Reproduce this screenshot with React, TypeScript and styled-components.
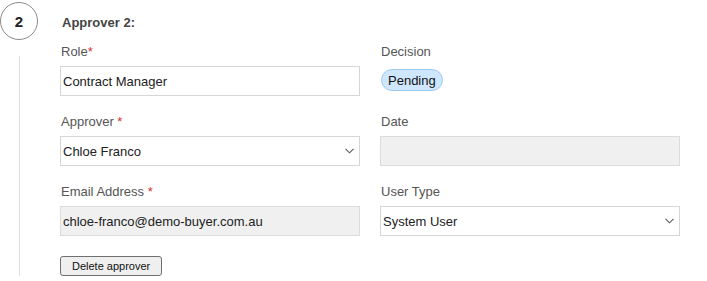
import React from "react";
import styled, { createGlobalStyle } from "styled-components";

const GlobalStyle = createGlobalStyle`
    body {
        margin: 0;
        background: #ffffff;
        font-family: "Liberation Sans", Arial, sans-serif;
    }
`;

type FieldProps = {
    label: string;
    required?: boolean;
    spaced?: boolean;
    children: React.ReactNode;
};

const Field = ({ label, required, spaced, children }: FieldProps) => (
    <FieldBox>
        <Label>
            {label}
            {required && <Star>{spaced ? " *" : "*"}</Star>}
        </Label>
        {children}
    </FieldBox>
);

const Chevron = () => (
    <ChevronIcon width="9" height="6" viewBox="0 0 9 6">
        <path d="M0.5 0.8 L4.5 4.8 L8.5 0.8" fill="none" stroke="#5a5a5a" strokeWidth="1.1" />
    </ChevronIcon>
);

type SelectProps = { value: string; options: string[] };

const SelectBox = ({ value, options }: SelectProps) => (
    <SelectWrap>
        <Select defaultValue={value}>
            {options.map((o) => (
                <option key={o}>{o}</option>
            ))}
        </Select>
        <Chevron />
    </SelectWrap>
);

export default function App() {
    return (
        <>
            <GlobalStyle />
            <Step>
                <Rail>
                    <StepNumber>2</StepNumber>
                    <RailLine />
                </Rail>
                <Body>
                    <Title>Approver 2:</Title>
                    <FieldGrid>
                        <Field label="Role" required>
                            <TextInput defaultValue="Contract Manager" />
                        </Field>
                        <Field label="Decision">
                            <BadgeRow>
                                <Badge>Pending</Badge>
                            </BadgeRow>
                        </Field>
                        <Field label="Approver" required spaced>
                            <SelectBox value="Chloe Franco" options={["Chloe Franco"]} />
                        </Field>
                        <Field label="Date">
                            <TextInput readOnly $locked defaultValue="" />
                        </Field>
                        <Field label="Email Address" required spaced>
                            <TextInput readOnly $locked defaultValue="chloe-franco@demo-buyer.com.au" />
                        </Field>
                        <Field label="User Type">
                            <SelectBox value="System User" options={["System User", "External User"]} />
                        </Field>
                    </FieldGrid>
                    <DeleteButton type="button">Delete approver</DeleteButton>
                </Body>
            </Step>
        </>
    );
}

const Step = styled.div`
    display: flex;
    padding-bottom: 5px;
`;

const Rail = styled.div`
    width: 40px;
    padding-top: 2px;
    display: flex;
    flex-direction: column;
    align-items: flex-start;
`;

const StepNumber = styled.div`
    width: 36px;
    height: 36px;
    border: 1px solid #8a8a8a;
    border-radius: 50%;
    display: flex;
    align-items: center;
    justify-content: center;
    font-size: 15px;
    font-weight: 700;
    color: #222;
`;

const RailLine = styled.div`
    flex: 1;
    width: 1px;
    margin-top: 16px;
    margin-left: 19px;
    background: #dedede;
`;

const Body = styled.div`
    margin-left: 20px;
    padding-top: 15px;
    display: flex;
    flex-direction: column;
    align-items: flex-start;
`;

const Title = styled.div`
    font-size: 13px;
    line-height: 15px;
    font-weight: 700;
    color: #444;
    padding-left: 2px;
    margin-bottom: 14px;
`;

const FieldGrid = styled.div`
    display: grid;
    grid-template-columns: 300px 300px;
    column-gap: 20px;
    row-gap: 18px;
`;

const FieldBox = styled.div`
    display: flex;
    flex-direction: column;
`;

const Label = styled.label`
    font-size: 13px;
    line-height: 15px;
    color: #555;
    padding-left: 1px;
    margin-bottom: 7px;
    white-space: pre;
`;

const Star = styled.span`
    color: #d0342c;
`;

const TextInput = styled.input<{ $locked?: boolean }>`
    box-sizing: border-box;
    width: 300px;
    height: 30px;
    margin: 0;
    padding: 0 2px;
    border: 1px solid ${(p) => (p.$locked ? "#dcdcdc" : "#d6d6d6")};
    border-radius: 0;
    background: ${(p) => (p.$locked ? "#f0f0f0" : "#ffffff")};
    font-family: "Liberation Sans", Arial, sans-serif;
    font-size: 13px;
    color: #222;
    outline: none;
`;

const SelectWrap = styled.div`
    position: relative;
    width: 300px;
    height: 30px;
`;

const Select = styled.select`
    box-sizing: border-box;
    appearance: none;
    width: 100%;
    height: 30px;
    margin: 0;
    padding: 0 2px;
    border: 1px solid #d6d6d6;
    border-radius: 0;
    background: #ffffff;
    font-family: "Liberation Sans", Arial, sans-serif;
    font-size: 13px;
    color: #222;
    outline: none;
`;

const ChevronIcon = styled.svg`
    position: absolute;
    right: 6px;
    top: 12px;
    pointer-events: none;
`;

const BadgeRow = styled.div`
    height: 30px;
    padding-top: 3px;
    box-sizing: border-box;
`;

const Badge = styled.span`
    display: inline-flex;
    align-items: center;
    box-sizing: border-box;
    height: 22px;
    margin-left: 1px;
    padding: 0 6px;
    border: 1px solid #9fcaf0;
    border-radius: 11px;
    background: #cfe6ff;
    font-size: 13px;
    color: #111;
`;

const DeleteButton = styled.button`
    margin-top: 20px;
    height: 20px;
    padding: 0 11px;
    border: 1px solid #6f6f6f;
    border-radius: 3px;
    background: #efefef;
    font-family: "Liberation Sans", Arial, sans-serif;
    font-size: 11px;
    color: #111;
    cursor: pointer;
`;
